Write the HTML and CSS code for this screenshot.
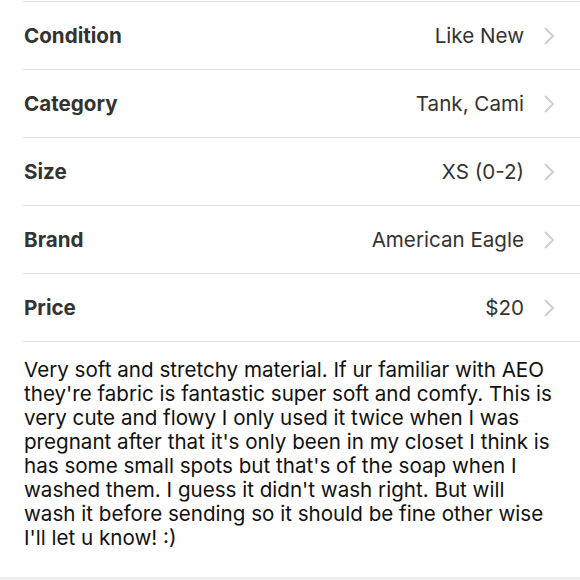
FILE: index.html
```html
<!DOCTYPE html>
<html lang="en">
<head>
    <meta charset="UTF-8">
    <meta name="viewport" content="width=device-width, initial-scale=1.0">
    <title>Listing details</title>
    <link rel="stylesheet" href="styles.css">
</head>
<body>
    <div class="details">
        <div class="row">
            <span class="label">Condition</span>
            <span class="value">Like New</span>
            <svg class="chevron" viewBox="0 0 12 20"><path d="M2 2 L10 10 L2 18"/></svg>
        </div>
        <div class="row">
            <span class="label">Category</span>
            <span class="value">Tank, Cami</span>
            <svg class="chevron" viewBox="0 0 12 20"><path d="M2 2 L10 10 L2 18"/></svg>
        </div>
        <div class="row">
            <span class="label">Size</span>
            <span class="value">XS (0-2)</span>
            <svg class="chevron" viewBox="0 0 12 20"><path d="M2 2 L10 10 L2 18"/></svg>
        </div>
        <div class="row">
            <span class="label">Brand</span>
            <span class="value">American Eagle</span>
            <svg class="chevron" viewBox="0 0 12 20"><path d="M2 2 L10 10 L2 18"/></svg>
        </div>
        <div class="row">
            <span class="label">Price</span>
            <span class="value">$20</span>
            <svg class="chevron" viewBox="0 0 12 20"><path d="M2 2 L10 10 L2 18"/></svg>
        </div>
        <div class="row-end"></div>
    </div>
    <p class="description">Very soft and stretchy material. If ur familiar with AEO they're fabric is fantastic super soft and comfy. This is very cute and flowy I only used it twice when I was pregnant after that it's only been in my closet I think is has some small spots but that's of the soap when I washed them. I guess it didn't wash right. But will wash it before sending so it should be fine other wise I'll let u know! :)</p>
    <div class="bottom-band"></div>
</body>
</html>
```

FILE: styles.css
```css
/* page */
body {
    margin: 0;
    padding-top: 1px;
    background-color: #fff;
    font-family: "Inter", "Roboto", sans-serif;
    color: #333;
}

/* rows with separators */
.details {
    margin-left: 23px;
}
.row {
    display: flex;
    align-items: center;
    height: 67px;
    border-top: 1px solid #e0e0e0;
    padding-left: 1px;
    padding-right: 25px;
}
.row-end {
    border-top: 1px solid #e0e0e0;
}
.label {
    font-size: 20.6px;
    font-weight: 700;
    color: #333;
}
.value {
    margin-left: auto;
    font-size: 20.6px;
    color: #333;
}
.chevron {
    width: 12px;
    height: 20px;
    margin-left: 19px;
    fill: none;
    stroke: #cdcdd2;
    stroke-width: 2;
}

/* description */
.description {
    margin: 0;
    padding: 16px 24px 27px 24px;
    font-size: 20.6px;
    line-height: 24px;
    color: #111;
}
.bottom-band {
    height: 10px;
    background-color: #efefef;
}
```
